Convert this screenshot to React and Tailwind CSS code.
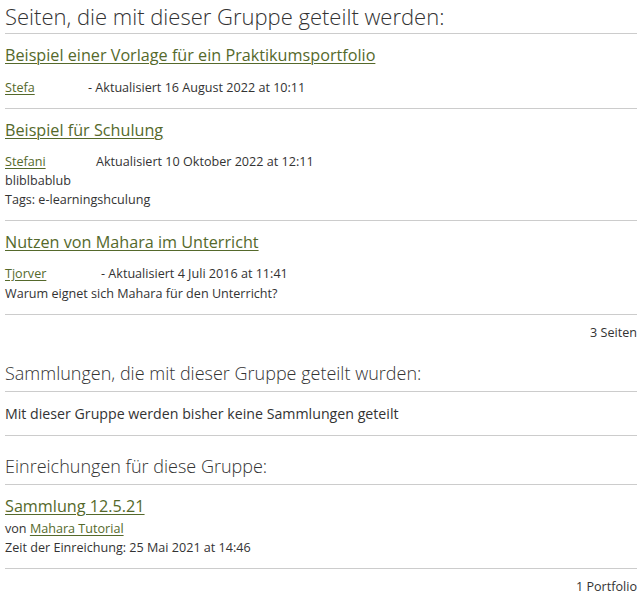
import React from "react";

// ─── Data ──────────────────────────────────────────────────────────────────────
const pages = [
  {
    title: "Beispiel einer Vorlage für ein Praktikumsportfolio",
    author: "Stefa",
    gap: "w-[83px]",
    date: "- Aktualisiert 16 August 2022 at 10:11",
    lines: [],
    metaTop: "mt-[11px]",
  },
  {
    title: "Beispiel für Schulung",
    author: "Stefani",
    gap: "w-[91px]",
    date: "Aktualisiert 10 Oktober 2022 at 12:11",
    lines: ["bliblbablub", "Tags: e-learningshculung"],
    metaTop: "mt-[10px]",
  },
  {
    title: "Nutzen von Mahara im Unterricht",
    author: "Tjorver",
    gap: "w-[96px]",
    date: "- Aktualisiert 4 Juli 2016 at 11:41",
    lines: ["Warum eignet sich Mahara für den Unterricht?"],
    metaTop: "mt-[10px]",
    loose: true,
  },
];

const link = "text-[#55692b] underline decoration-1 underline-offset-2";
const small = "text-[12.6px] leading-[19px]";

const Heading = ({ children, className = "" }) => (
  <h2 className={`font-light text-[#333] leading-[28px] border-b border-[#ccc] ${className}`}>
    {children}
  </h2>
);

const PageItem = ({ page }) => (
  <div className="pt-[9px] pb-[11px] border-b border-[#ccc]">
    <a href="#" className={`${link} text-[16.2px] leading-6 block w-fit`}>{page.title}</a>
    <div className={`${page.metaTop} ${small}`}>
      <div className="flex">
        <span className={`${page.gap} shrink-0`}>
          <a href="#" className={link}>{page.author}</a>
        </span>
        <span>{page.date}</span>
      </div>
      {page.lines.map((l) => (
        <div key={l} className={page.loose ? "mt-[1px]" : ""}>{l}</div>
      ))}
    </div>
  </div>
);

export default function App() {
  return (
    <div
      className="bg-white text-[#333] pl-[5px] pr-[7px] min-h-[595px]"
      style={{ fontFamily: '"Open Sans", "Liberation Sans", sans-serif' }}
    >
      {/* Seiten */}
      <Heading className="text-[22px] pt-[2px] pb-[3px]">Seiten, die mit dieser Gruppe geteilt werden:</Heading>
      {pages.map((p) => (
        <PageItem key={p.title} page={p} />
      ))}
      <div className={`text-right ${small} pt-[8px]`}>3 Seiten</div>

      {/* Sammlungen */}
      <Heading className="text-[18px] mt-[17px] pb-[4px]">Sammlungen, die mit dieser Gruppe geteilt wurden:</Heading>
      <div className="text-[14.2px] leading-[19px] pt-[12px] pb-[12px] border-b border-[#ccc]">
        Mit dieser Gruppe werden bisher keine Sammlungen geteilt
      </div>

      {/* Einreichungen */}
      <Heading className="text-[18px] mt-[16px] pb-[4px]">Einreichungen für diese Gruppe:</Heading>
      <div className="pt-[9px] pb-[11px] border-b border-[#ccc]">
        <a href="#" className={`${link} text-[16.2px] leading-6 block w-fit`}>Sammlung 12.5.21</a>
        <div className={`${small} mt-[1px]`}>
          von <a href="#" className={link}>Mahara Tutorial</a>
        </div>
        <div className={small}>Zeit der Einreichung: 25 Mai 2021 at 14:46</div>
      </div>
      <div className={`text-right ${small} pt-[8px]`}>1 Portfolio</div>
    </div>
  );
}
